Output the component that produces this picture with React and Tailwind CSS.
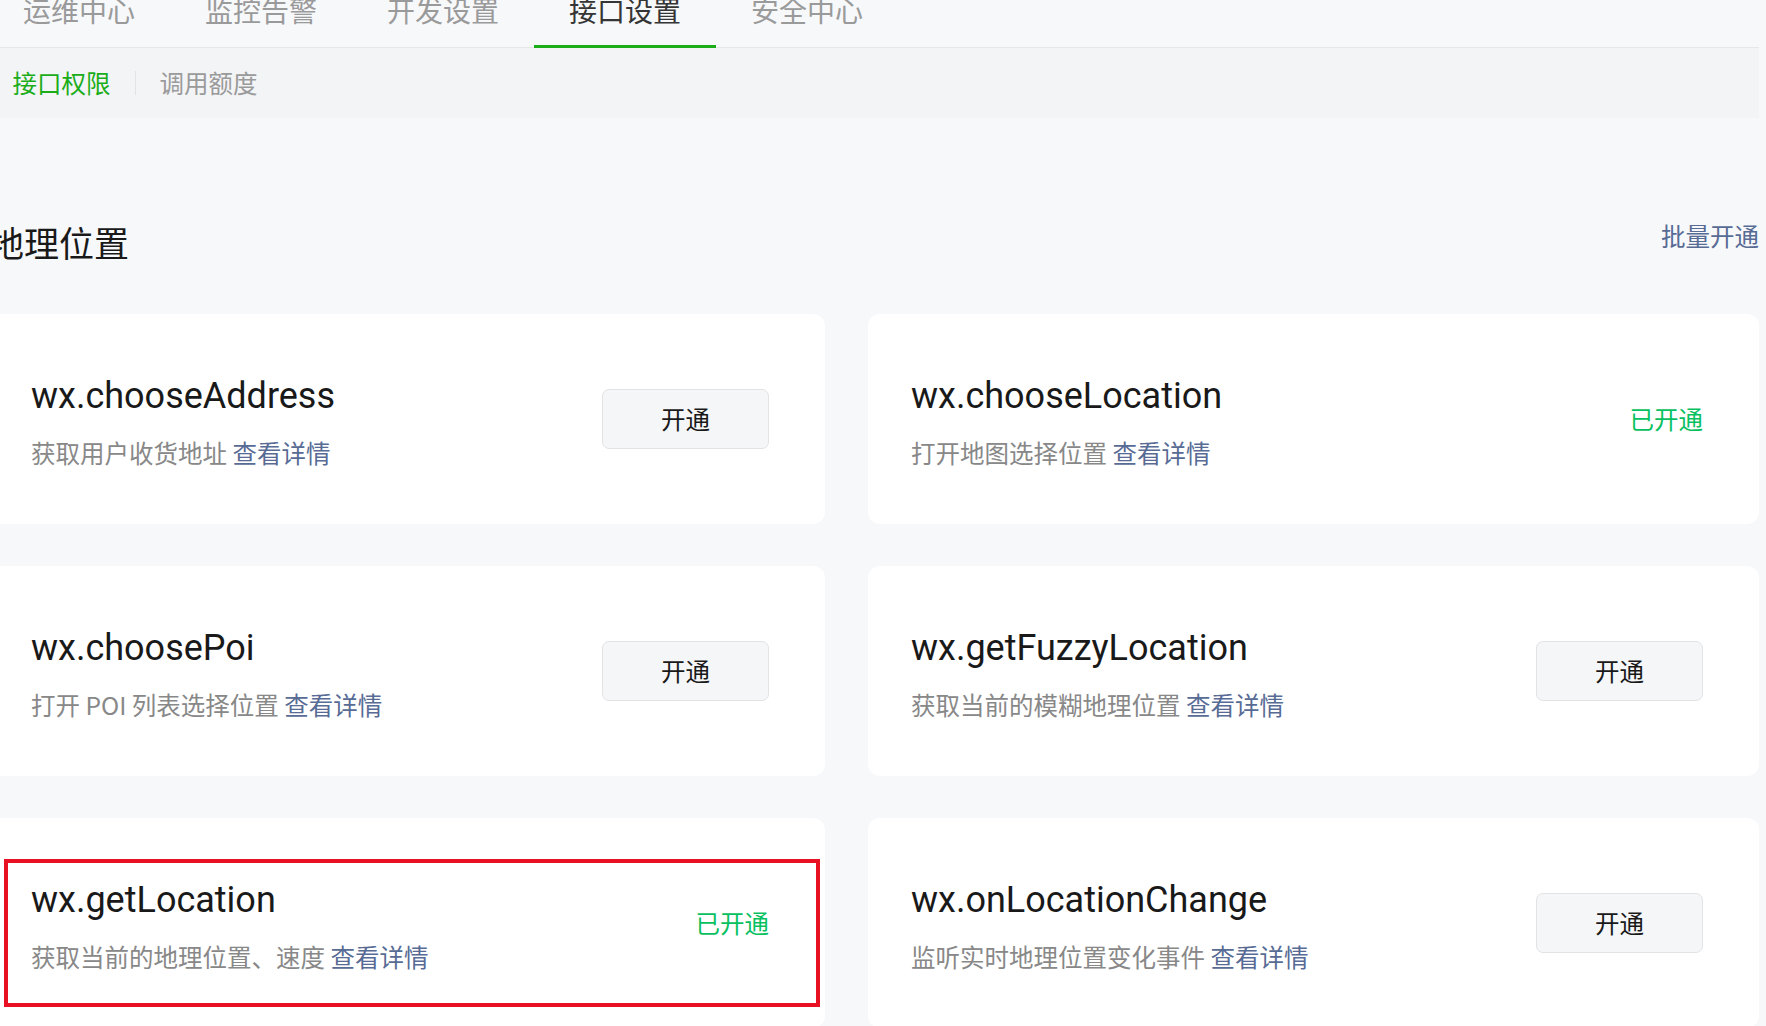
import React from "react";

const cjk = "font-['Noto_Sans_CJK_SC',sans-serif]";

const tabs = ["运维中心", "监控告警", "开发设置", "接口设置", "安全中心"];

const apis = [
  { name: "wx.chooseAddress", desc: "获取用户收货地址", opened: false },
  { name: "wx.chooseLocation", desc: "打开地图选择位置", opened: true },
  { name: "wx.choosePoi", desc: "打开 POI 列表选择位置", opened: false },
  { name: "wx.getFuzzyLocation", desc: "获取当前的模糊地理位置", opened: false },
  { name: "wx.getLocation", desc: "获取当前的地理位置、速度", opened: true },
  { name: "wx.onLocationChange", desc: "监听实时地理位置变化事件", opened: false },
];

function Card({ api }) {
  return (
    <div className="h-[210px] rounded-[12px] bg-white flex items-center justify-between pl-[43px] pr-[56px]">
      <div className="self-start pt-[62px]">
        <div className="font-['Roboto',sans-serif] text-[36px] leading-[40px] text-[#191919] whitespace-nowrap">
          {api.name}
        </div>
        <div className={`${cjk} mt-[21px] text-[24.5px] leading-[32px] text-[#888888] whitespace-nowrap`}>
          {api.desc} <span className="text-[#576b95]">查看详情</span>
        </div>
      </div>
      {api.opened ? (
        <div className={`${cjk} text-[24.5px] leading-[32px] text-[#07c160]`}>已开通</div>
      ) : (
        <button className={`${cjk} w-[167px] h-[60px] rounded-[7px] border border-[#e2e3e5] bg-[#f5f6f7] text-[24.5px] text-[#191919] flex items-center justify-center`}>
          开通
        </button>
      )}
    </div>
  );
}

export default function App() {
  return (
    <div className="relative w-[1766px] h-[1026px] overflow-hidden bg-[#f7f8fa]">
      <div className="ml-[-12px] w-[1771px]">
        {/* Top tabs */}
        <div className="flex h-[48px] border-b border-[#e6e7e9]">
          {tabs.map((t) => {
            const active = t === "接口设置";
            return (
              <div key={t} className="relative h-[47px] px-[35px]">
                <div
                  className={`${cjk} text-[28px] leading-[21px] whitespace-nowrap ${
                    active ? "text-[#353535]" : "text-[#9a9a9a]"
                  }`}
                >
                  {t}
                </div>
                {active && (
                  <span className="absolute left-0 right-0 bottom-[-1px] h-[3px] bg-[#1aad19]" />
                )}
              </div>
            );
          })}
        </div>

        {/* Sub tabs */}
        <div className="h-[70px] bg-[#f3f4f6] flex items-center pl-[24.5px]">
          <span className={`${cjk} text-[24.5px] leading-[24.5px] text-[#1aad19]`}>接口权限</span>
          <span className="mx-[24px] w-px h-[24px] bg-[#e2e3e5]" />
          <span className={`${cjk} text-[24.5px] leading-[24.5px] text-[#9a9a9a]`}>调用额度</span>
        </div>

        {/* Section header */}
        <div className="flex items-start justify-between pt-[106px] mb-[55px]">
          <div className={`${cjk} ml-[1px] text-[35px] leading-[35px] text-[#191919]`}>地理位置</div>
          <div className={`${cjk} text-[24.5px] leading-[24.5px] text-[#576b95]`}>批量开通</div>
        </div>

        {/* Cards */}
        <div className="grid grid-cols-[837px_891px] gap-x-[43px] gap-y-[42px]">
          {apis.map((a) => (
            <Card key={a.name} api={a} />
          ))}
        </div>
      </div>

      {/* annotation box */}
      <div className="absolute left-[4px] top-[859px] w-[816px] h-[148px] border-[4px] border-[#e81123]" />
    </div>
  );
}
